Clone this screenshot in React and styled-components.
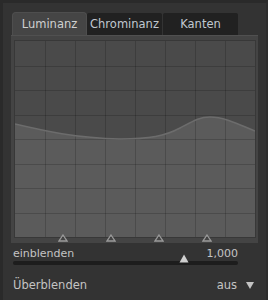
import styled, { createGlobalStyle } from "styled-components";

const GlobalStyle = createGlobalStyle`
  html, body {
    margin: 0;
    padding: 0;
    background: #333333;
  }
`;

const Page = styled.div`
  box-sizing: border-box;
  width: 268px;
  height: 300px;
  background: #333333;
  border-top: 3px solid #2a2a2a;
  border-left: 3px solid #2a2a2a;
  border-right: 2px solid #2d2d2d;
  padding: 9px 8px 0 8px;
  font-family: "DejaVu Sans", "Liberation Sans", sans-serif;
  font-size: 11px;
  color: #c4c4c4;
`;

const TabBar = styled.div`
  display: flex;
  align-items: flex-end;
  height: 23px;
  padding-left: 1px;
`;

const Tab = styled.div`
  width: 75px;
  height: ${(p) => (p.active ? "23px" : "22px")};
  margin-right: ${(p) => (p.active ? "0" : "1px")};
  box-sizing: border-box;
  display: flex;
  align-items: center;
  justify-content: center;
  background: ${(p) => (p.active ? "#454545" : "#212121")};
  color: ${(p) => (p.active ? "#d0d0d0" : "#c0c8d0")};
  border-radius: ${(p) => (p.active ? "4px 4px 0 0" : "2px 2px 0 0")};
  border: ${(p) => (p.active ? "1px solid #4e4e4e" : "none")};
  border-bottom: none;
  font-size: 11.5px;
`;

const Frame = styled.div`
  position: relative;
  box-sizing: border-box;
  width: 247px;
  height: 208px;
  background: #444444;
  border-top: 1px solid #505050;
  padding: 4px 2px 0 3px;
`;

const Graph = styled.svg`
  display: block;
  border: 1px solid #383838;
`;

const Markers = styled.div`
  position: absolute;
  left: 4px;
  right: 3px;
  bottom: 1px;
  height: 8px;
`;

const Marker = styled.svg`
  position: absolute;
  bottom: 0;
  margin-left: -5px;
`;

const SliderBlock = styled.div`
  padding: 4px 20px 0 2px;
`;

const SliderHead = styled.div`
  display: flex;
  justify-content: space-between;
  line-height: 13px;
  height: 13px;
`;

const Track = styled.div`
  position: relative;
  height: 4px;
  margin-top: 1px;
  background: #1d1d1d;
  border-radius: 2px;
`;

const Thumb = styled.svg`
  position: absolute;
  top: -7px;
  margin-left: -5px;
`;

const ComboRow = styled.div`
  display: flex;
  align-items: center;
  justify-content: space-between;
  margin-top: 13px;
  padding: 0 4px 0 2px;
  line-height: 14px;
  font-size: 11.5px;
`;

const ComboValue = styled.div`
  display: flex;
  align-items: center;
  gap: 9px;
`;

const Arrow = styled.svg`
  display: block;
`;

const W = 240;
const H = 196;
const curve =
  "M0,83 C30,90 60,97 105,98 C135,98 150,95 165,87 C180,79 185,76 195,76 C210,76 225,84 240,90";

const markers = [48, 96, 144, 192];

function CurveGraph() {
  const cols = [];
  for (let i = 1; i < 8; i++) cols.push(i * 30);
  const rows = [];
  for (let i = 1; i < 8; i++) rows.push(Math.round(i * 24.5));
  return (
    <Graph width={W} height={H} viewBox={`0 0 ${W} ${H}`}>
      <rect width={W} height={H} fill="#4a4a4a" />
      <path d={`${curve} L${W},${H} L0,${H} Z`} fill="#5b5b5b" />
      {cols.map((x) => (
        <line key={"c" + x} x1={x + 0.5} y1="0" x2={x + 0.5} y2={H} stroke="rgba(0,0,0,0.17)" />
      ))}
      {rows.map((y) => (
        <line key={"r" + y} x1="0" y1={y + 0.5} x2={W} y2={y + 0.5} stroke="rgba(0,0,0,0.17)" />
      ))}
      <path d={curve} fill="none" stroke="#6c6c6c" strokeWidth="1.5" />
    </Graph>
  );
}

export default function App() {
  return (
    <Page>
      <GlobalStyle />
      <TabBar>
        <Tab active>Luminanz</Tab>
        <Tab>Chrominanz</Tab>
        <Tab>Kanten</Tab>
      </TabBar>
      <Frame>
        <CurveGraph />
        <Markers>
          {markers.map((x) => (
            <Marker key={x} width="10" height="8" viewBox="0 0 10 8" style={{ left: x }}>
              <path d="M5,1 L9,7 L1,7 Z" fill="none" stroke="#9a9a9a" strokeWidth="1.3" />
            </Marker>
          ))}
        </Markers>
      </Frame>
      <SliderBlock>
        <SliderHead>
          <span>einblenden</span>
          <span>1,000</span>
        </SliderHead>
        <Track>
          <Thumb width="10" height="9" viewBox="0 0 10 9" style={{ left: "76%" }}>
            <path d="M5,0.5 L9.5,8.5 L0.5,8.5 Z" fill="#d0d0d0" />
          </Thumb>
        </Track>
      </SliderBlock>
      <ComboRow>
        <span>Überblenden</span>
        <ComboValue>
          <span>aus</span>
          <Arrow width="8" height="7" viewBox="0 0 8 7">
            <path d="M0,0 L8,0 L4,7 Z" fill="#c4c4c4" />
          </Arrow>
        </ComboValue>
      </ComboRow>
    </Page>
  );
}
